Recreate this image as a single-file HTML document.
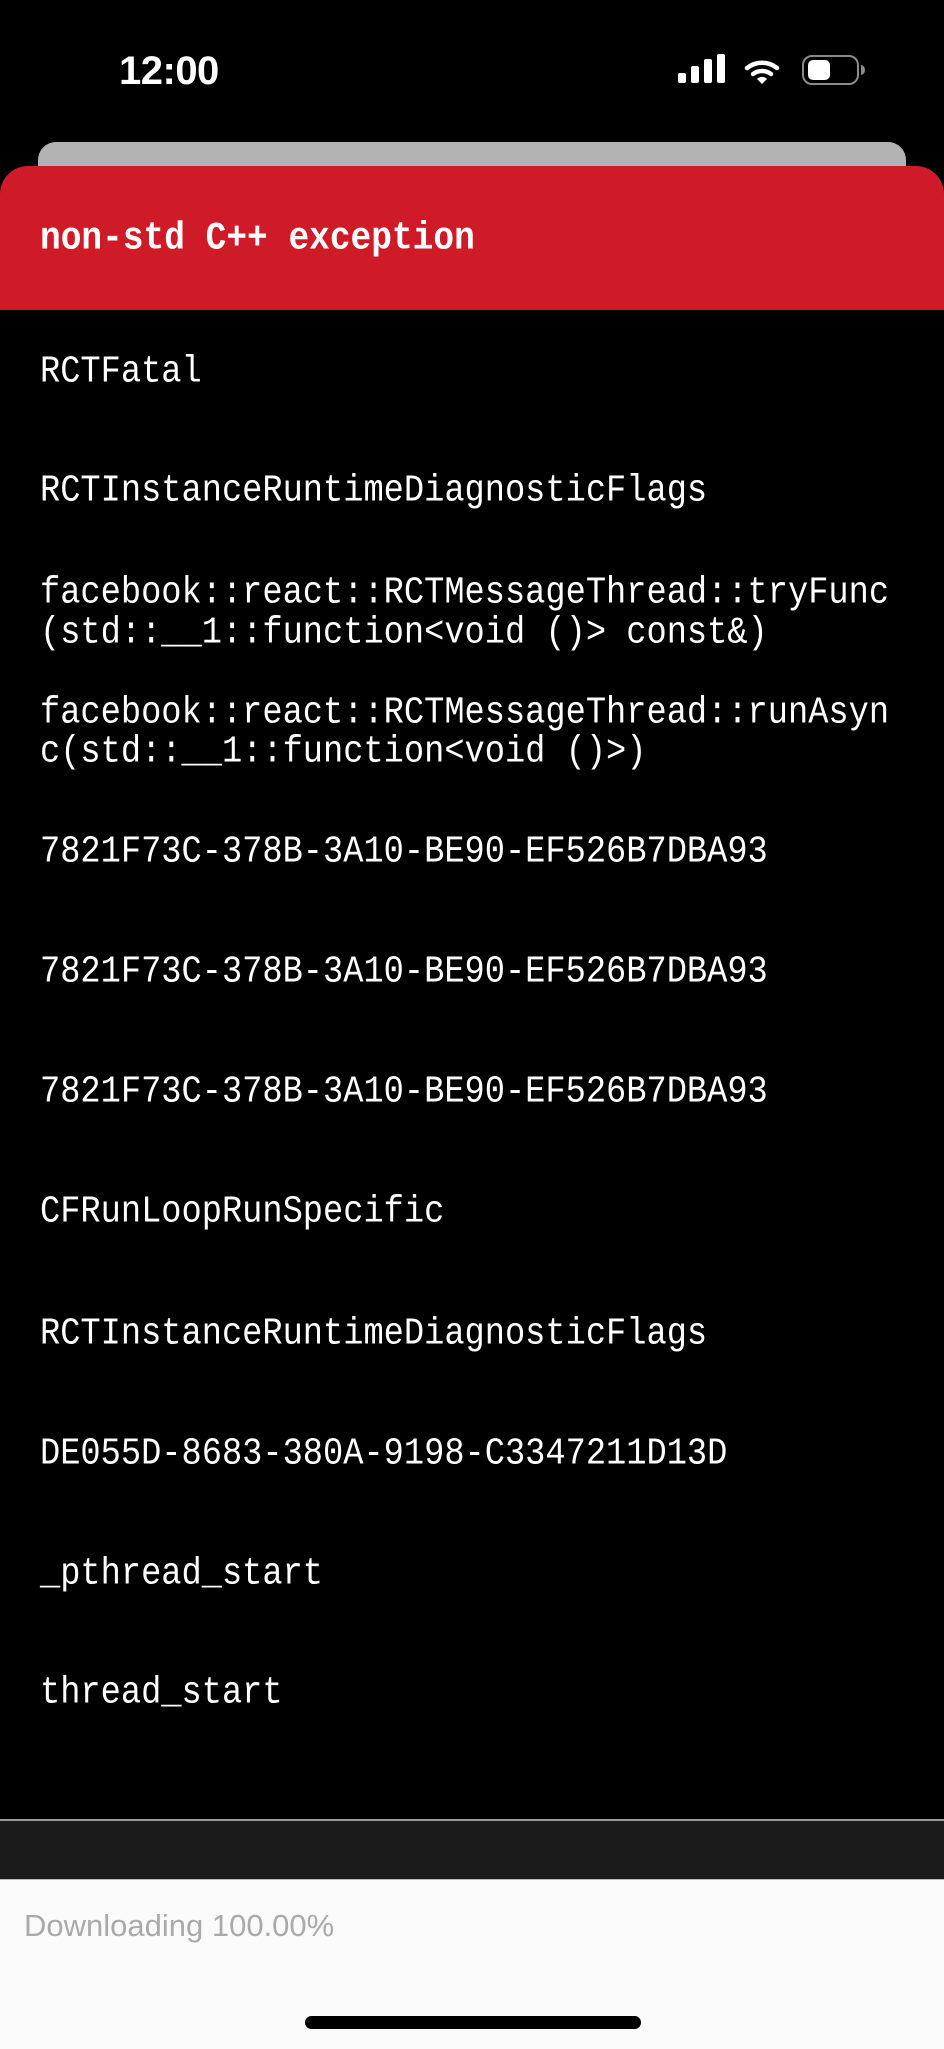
<!DOCTYPE html>
<html><head><meta charset="utf-8"><style>
html,body{margin:0;padding:0;background:#000;}
body{width:944px;height:2048px;position:relative;overflow:hidden;}
.t{position:absolute;left:40px;color:#fff;font-family:"Liberation Mono",monospace;font-size:33.7px;line-height:1;white-space:pre;transform:scaleY(1.12);transform-origin:0 85%;}
</style></head><body>
<div style="position:absolute;left:119px;top:51px;color:#fff;font-family:'Liberation Sans',sans-serif;font-weight:bold;font-size:40px;line-height:1;letter-spacing:-0.5px">12:00</div>
<svg style="position:absolute;left:660px;top:45px" width="220" height="50" viewBox="0 0 220 50">
<rect x="18" y="28" width="8" height="10" rx="2" fill="#fff"/>
<rect x="31" y="21" width="8" height="17" rx="2" fill="#fff"/>
<rect x="44" y="14" width="8" height="24" rx="2" fill="#fff"/>
<rect x="57" y="9" width="8" height="29" rx="2" fill="#fff"/>
<path d="M87 23 A24 24 0 0 1 117 23" stroke="#fff" stroke-width="4.5" fill="none" stroke-linecap="round"/>
<path d="M93 29 A15 15 0 0 1 111 29" stroke="#fff" stroke-width="4.5" fill="none" stroke-linecap="round"/>
<path d="M97 34 L102 39 L107 34 A7 7 0 0 0 97 34Z" fill="#fff"/>
<rect x="143" y="11" width="55" height="28" rx="9" fill="none" stroke="#8a8a8a" stroke-width="2"/>
<rect x="148" y="15" width="22" height="20" rx="5" fill="#fff"/>
<path d="M201 20 a4 5 0 0 1 0 10z" fill="#8a8a8a"/>
</svg>
<div style="position:absolute;left:38px;top:142px;width:868px;height:60px;background:#b3b3b3;border-radius:18px 18px 0 0"></div>
<div style="position:absolute;left:0;top:166px;width:944px;height:144px;background:#cf1a27;border-radius:28px 28px 0 0"></div>
<div class="t" style="top:224px;font-weight:bold;font-size:34.5px">non-std C++ exception</div>
<div class="t" style="top:358px">RCTFatal</div>
<div class="t" style="top:477px">RCTInstanceRuntimeDiagnosticFlags</div>
<div class="t" style="top:579px">facebook::react::RCTMessageThread::tryFunc</div>
<div class="t" style="top:619px">(std::__1::function&lt;void ()&gt; const&amp;)</div>
<div class="t" style="top:699px">facebook::react::RCTMessageThread::runAsyn</div>
<div class="t" style="top:738px">c(std::__1::function&lt;void ()&gt;)</div>
<div class="t" style="top:838px">7821F73C-378B-3A10-BE90-EF526B7DBA93</div>
<div class="t" style="top:958px">7821F73C-378B-3A10-BE90-EF526B7DBA93</div>
<div class="t" style="top:1078px">7821F73C-378B-3A10-BE90-EF526B7DBA93</div>
<div class="t" style="top:1198px">CFRunLoopRunSpecific</div>
<div class="t" style="top:1320px">RCTInstanceRuntimeDiagnosticFlags</div>
<div class="t" style="top:1440px">DE055D-8683-380A-9198-C3347211D13D</div>
<div class="t" style="top:1560px">_pthread_start</div>
<div class="t" style="top:1679px">thread_start</div>
<div style="position:absolute;left:0;top:1819px;width:944px;height:2px;background:#9a9a9a"></div>
<div style="position:absolute;left:0;top:1821px;width:944px;height:58px;background:#1b1b1b"></div>
<div style="position:absolute;left:0;top:1879px;width:944px;height:169px;background:#fafafa;border-top:1px solid #bbb"></div>
<div style="position:absolute;left:24px;top:1910px;color:#aaa;font-family:'Liberation Sans',sans-serif;font-size:31px;line-height:1">Downloading 100.00%</div>
<div style="position:absolute;left:305px;top:2016px;width:336px;height:13px;background:#000;border-radius:7px"></div>
</body></html>
